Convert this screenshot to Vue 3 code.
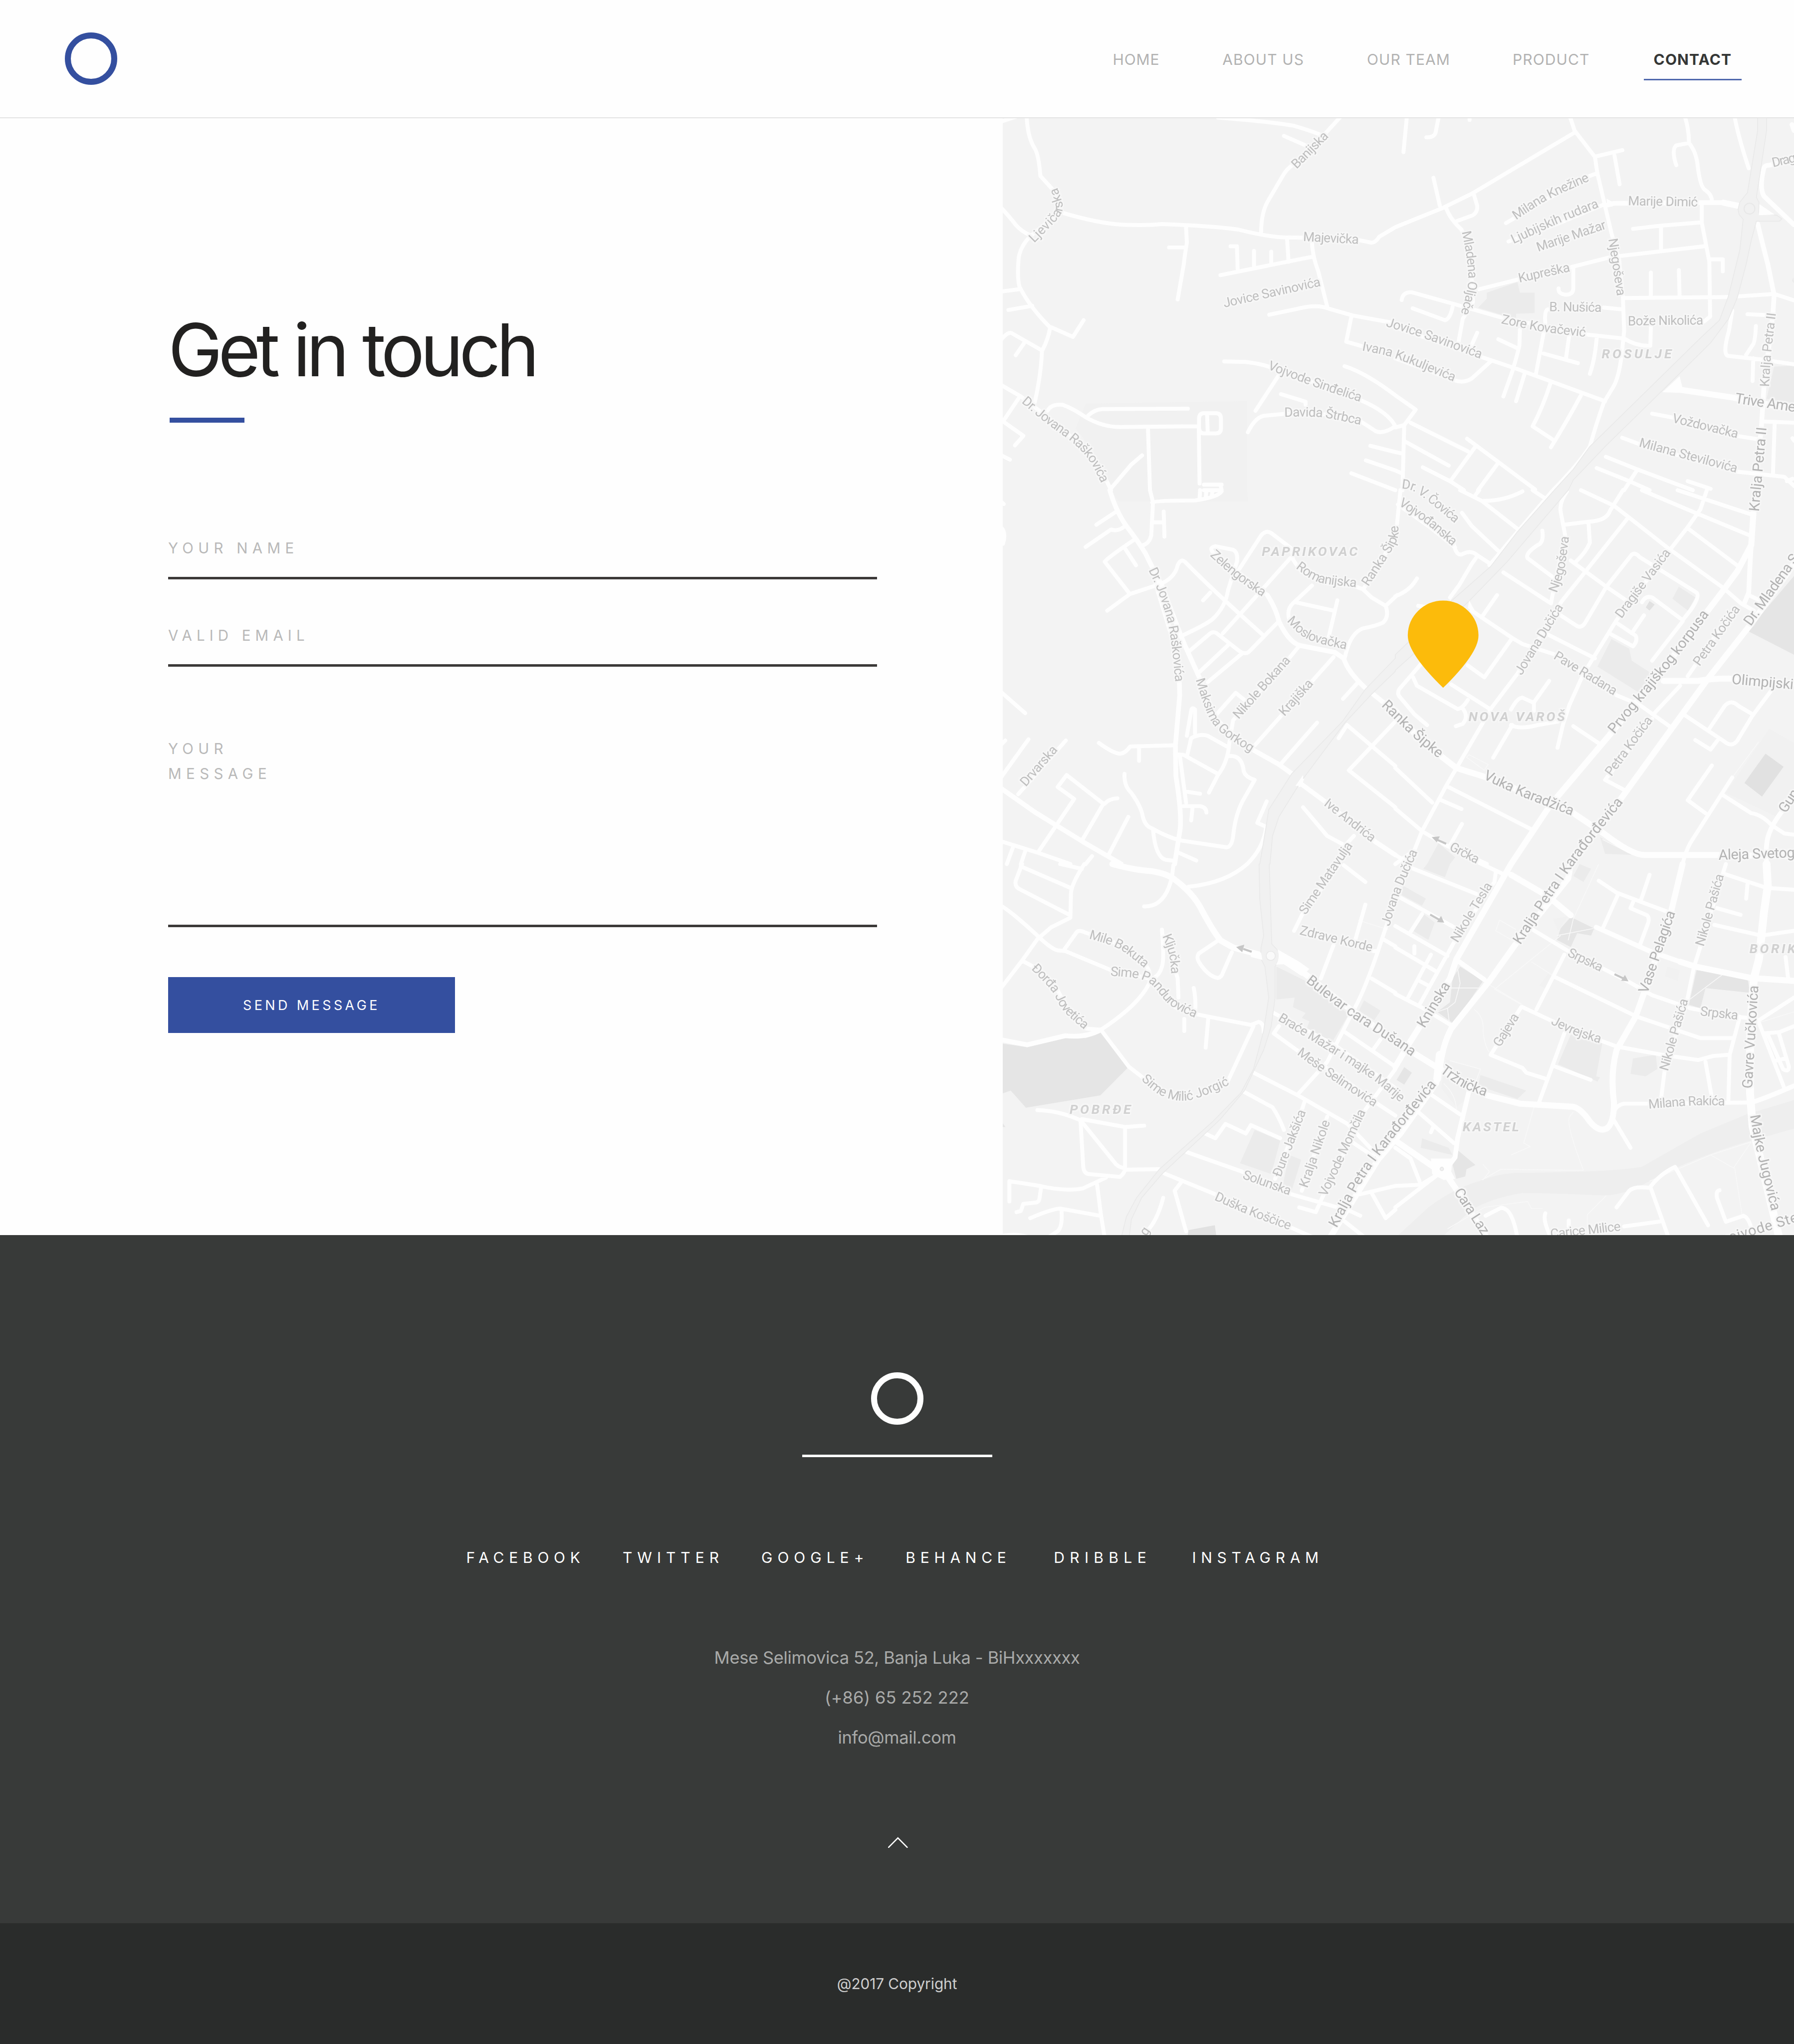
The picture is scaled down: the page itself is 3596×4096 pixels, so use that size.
<script setup>
const nav = [
  { label: 'HOME' },
  { label: 'ABOUT US' },
  { label: 'OUR TEAM' },
  { label: 'PRODUCT' },
  { label: 'CONTACT', active: true },
]

const socials = ['FACEBOOK', 'TWITTER', 'GOOGLE+', 'BEHANCE', 'DRIBBLE', 'INSTAGRAM']

/*
 * City map. The area is surveyed in six sectors (a b / c d / e f), each on its
 * own 1568-unit grid. A lowercase letter switches the sector; project() turns
 * sector coordinates into map coordinates.
 */
const sectors = {
  a: [2400, 280], b: [3360, 280],
  c: [2400, 1180], d: [3360, 1180],
  e: [2400, 2080], f: [3360, 2080],
}
const SX = 960 / 1568
const SY = 900 / 1568

function project(src) {
  let origin = sectors.a
  return src.replace(/([a-f])|(-?\d+),(-?\d+)/g, (m, sector, x, y) => {
    if (sector) {
      origin = sectors[sector]
      return ''
    }
    return (origin[0] + x * SX).toFixed(1) + ',' + (origin[1] + y * SY).toFixed(1)
  })
}

const minorRoads = [
  // north-west
  'a M118,0 Q122,90 150,135 Q165,160 172,250 L240,330 L250,400 L130,505 Q90,550 86,600 Q80,680 90,715 Q130,800 210,885 Q205,930 178,985 Q175,1080 150,1200',
  'a M10,25 L75,2', 'a M10,375 Q50,420 75,455 Q100,485 135,500',
  'a M250,402 Q400,450 500,455 Q600,458 650,452 Q850,460 950,475 Q1080,510 1150,508 L1240,510 L1420,518 L1475,530 Q1490,530 1505,505 L1568,465 b L185,385 L300,325 L705,68',
  'a M745,465 L748,530 Q740,580 736,620 L712,768', 'a M678,550 L740,550',
  'a M870,5 Q1100,25 1170,40 Q1250,65 1290,85', 'a M1350,5 L1290,75 L1170,200 Q1140,220 1125,250 L1070,350 Q1040,400 1040,490',
  'a M1130,82 L1215,122', 'a M1142,510 L1148,610', 'a M880,666 L1245,588', 'a M1240,520 Q1240,580 1265,650 L1300,798',
  'a M920,545 L945,545 L948,645', 'a M1012,565 L1012,635', 'a M1080,568 L1080,620',
  'a M1072,832 L1180,808 Q1260,785 1310,808 L1400,835 L1568,868', 'a M1395,840 L1375,945 L1440,965',
  'a M15,735 L90,725', 'a M46,812 L140,795', 'a M215,885 L300,925 L342,855', 'a M15,940 Q45,900 60,910 L175,980', 'a M112,945 L75,1002',
  'a M10,1122 L95,1175 Q250,1300 330,1380 Q400,1450 450,1568', 'a M85,1185 L28,1275', 'a M15,1272 L105,1340 L72,1380', 'a M15,1420 L52,1440',
  'a M200,1235 Q215,1205 260,1210 Q300,1225 350,1262 Q420,1305 490,1303 L790,1300', 'a M360,1255 Q385,1230 415,1228 L752,1226',
  'a M595,1305 L603,1568', 'a M795,1300 L798,1540',
  'a M815,1245 L862,1245 Q882,1245 882,1268 L882,1310 Q882,1330 860,1330 L815,1330 Q796,1330 796,1305 L796,1270 Q796,1245 815,1245Z',
  'a M828,1255 L830,1320', 'a M815,1545 L885,1545', 'a M815,1568 L885,1568 L880,1545',
  'a M450,1560 L530,1460 L572,1422', 'a M895,1028 L980,1030 Q1040,1038 1070,1050 L1230,1110 L1430,1190 Q1540,1240 1568,1300',
  'a M1108,1088 L1018,1235', 'a M1118,1165 L1215,1197 L1215,1210',
  'a M988,1325 Q1020,1255 1060,1255 L1130,1248 L1300,1250 L1430,1278 L1490,1320 Q1520,1335 1568,1300',
  'a M1368,1048 Q1450,1075 1568,1170 b L80,1230 L35,1295 L0,1305', 'a M1470,1382 L1568,1408 b L25,1414', 'a M1452,1443 L1568,1485 b L25,1497', 'a M1395,1497 L1568,1568',
  // north-east
  'b M45,5 L32,150', 'b M170,5 L158,70 Q150,90 122,88', 'b M292,5 L292,15',
  'b M688,5 L705,60 L785,170 L795,240 L830,400 L850,490 L880,600 L895,760 L900,900 L895,950 Q885,1080 860,1130 L820,1200 Q790,1290 765,1385 Q720,1460 620,1568',
  'b M150,258 L175,375', 'b M200,385 Q215,430 260,475 L295,560 L305,780 L265,850 L248,950', 'b M308,325 L322,375 Q325,400 305,415 L240,440',
  'b M790,168 L893,142', 'b M862,165 L882,285', 'b M795,238 L760,252 L600,345 L435,448', 'b M445,525 L640,450 L820,370',
  'b M1140,5 Q1155,60 1155,110', 'b M1105,205 Q1085,140 1105,122 L1155,112 Q1185,150 1190,215 Q1200,300 1220,310 Q1245,330 1245,355',
  'b M1335,5 Q1350,90 1390,218', 'b M935,472 L1050,458 L1200,445', 'b M1045,470 L1045,560', 'b M1205,375 L1205,445 L1235,610 L1238,840 L1215,860',
  'b M330,725 L480,685 L700,630 L850,590 L1215,545', 'b M1235,600 L1288,600 L1288,650', 'b M700,640 L700,720 Q700,748 670,748 Q640,745 642,722',
  'b M895,762 L1310,758', 'b M1350,755 L1490,745 L1568,772', 'b M1005,655 L1005,755', 'b M1115,645 L1118,755',
  'b M25,770 Q30,735 65,738 L240,790 L420,845 L750,915 L900,932 Q950,965 1003,962 L1005,885', 'b M68,805 L195,855 Q215,850 225,800',
  'b M820,802 L895,810', 'b M600,810 Q585,815 590,870 L553,1080', 'b M405,935 L475,970', 'b M490,895 L488,960 Q480,1000 460,1070 L425,1175',
  'b M510,1075 L475,1195', 'b M322,908 L298,965', 'b M0,885 L150,940 L340,1010 L480,1060 L825,1195', 'b M375,1028 L300,1100 Q270,1120 235,1108 L0,1015',
  'b M683,925 L672,1010', 'b M583,995 L718,1035', 'b M792,930 Q785,1020 765,1080', 'b M610,1120 Q580,1220 540,1300 L625,1360', 'b M730,1170 Q680,1270 612,1388',
  'b M1325,815 L1312,900 Q1285,1000 1310,1005 L1440,1020 L1568,1040', 'b M1385,830 L1480,835', 'b M1418,880 Q1415,950 1405,960 L1380,1000', 'b M1408,1015 L1405,1110',
  'b M1010,1247 L1100,1265 L1340,1340 L1430,1355', 'b M892,1348 L960,1375 L1340,1490 L1530,1512 L1568,1550', 'b M828,1428 L950,1480 L1170,1568',
  'b M792,1475 L920,1530 L1000,1568', 'b M950,1485 L900,1568', 'b M1150,1530 L1240,1562', 'b M1450,1280 L1568,1285', 'b M1492,1285 L1485,1505',
  'b M60,1285 L285,1405', 'b M35,1300 L28,1568', 'b M40,1365 L210,1465', 'b M282,1352 L550,1565', 'b M315,1385 L220,1525', 'b M108,1472 L215,1530 L270,1568', 'b M400,1460 L325,1568',
  'b M1562,1350 L1568,1360', 'b M1562,1520 L1540,1530',
  // west
  'c M470,90 L392,145', 'c M505,150 Q480,175 450,165 L350,238', 'c M603,0 L615,50 L608,190 Q600,225 572,232', 'c M612,52 Q620,43 780,43 Q870,30 885,5',
  'c M800,0 L798,35', 'c M825,0 L822,32', 'c M850,0 L845,28', 'c M657,90 L660,195', 'c M615,135 L655,135', 'c M545,205 Q440,280 425,300 L520,430', 'c M505,245 L548,315',
  'c M435,505 L525,435 L640,395 Q700,370 712,315 Q725,285 740,300 Q850,420 1045,605', 'c M840,430 L812,462',
  'c M730,610 Q830,560 850,540 Q900,490 910,420 L945,300 Q950,260 930,250 L860,235 Q835,240 850,260 L1065,440',
  'c M955,330 L1040,190 Q1060,165 1080,180 L1160,245 L1165,285', 'c M1155,285 L970,505 L890,600', 'c M1165,290 L1190,330 Q1250,400 1400,400 L1440,415 L1475,450 L1530,485 L1575,440',
  'c M1530,485 Q1545,530 1520,555 Q1490,570 1440,580 Q1390,600 1370,700', 'c M1240,400 L1165,475 Q1140,500 1150,540', 'c M1175,470 L1325,505', 'c M1340,462 L1305,620', 'c M1445,410 L1568,200',
  'c M1105,555 L990,680 Q975,690 955,675 L865,600 Q850,590 835,605 L752,680', 'c M910,650 L795,765', 'c M965,685 L830,805', 'c M1185,660 L1150,705 L930,965 L915,1060', 'c M1325,700 L1250,790 L1015,1070',
  'c M865,940 L940,850 L975,880', 'c M1418,810 L1362,875', 'c M1345,1040 L1378,985 L1568,1157', 'c M1568,970 L1385,1175 L1568,1330', 'c M1260,975 L1120,1145',
  'c M10,840 L112,935', 'c M10,1075 L34,1050', 'c M125,1045 L10,1215', 'c M272,1050 L85,1275', 'c M335,1470 L420,1315 L275,1195 L240,1245 L305,1295 L165,1515', 'c M475,1292 Q440,1295 425,1315',
  'c M10,1470 L160,1520 L290,1568', 'c M65,1495 L40,1568', 'c M112,1515 L95,1568', 'c M518,1370 L440,1530', 'c M375,1535 L350,1568',
  'c M402,1060 Q460,1105 485,1105 Q505,1105 525,1075 L700,1070', 'c M560,1080 L560,1135',
  'c M503,1190 Q500,1240 530,1270 Q570,1330 575,1370 Q585,1410 610,1418 Q680,1460 730,1470 L905,1498 Q925,1495 930,1450 Q940,1350 975,1290 L1015,1215 Q980,1205 972,1180 Q965,1110 915,1115',
  'c M615,1425 Q625,1540 665,1550 L700,1555', 'c M715,1520 L785,1553', 'c M748,1030 L765,925 Q768,908 780,920 L780,1020', 'c M750,1110 L765,1040 Q800,1020 830,1030 L905,1075',
  'c M915,1060 Q910,1140 870,1195 L835,1268', 'c M710,1108 L735,1110 L870,1190', 'c M720,1110 L745,1310', 'c M750,1265 L800,1273', 'c M735,1325 L800,1325 Q825,1330 825,1352', 'c M770,1335 L765,1385',
  'c M1062,1305 L1025,1395 L1060,1412 Q1050,1500 985,1568 e Q900,80 755,95', 'c M1205,1330 L1300,1450 L1370,1490 L1405,1450', 'c M10,150 Q40,170 25,225', 'c M15,45 L28,58',
  // centre and east
  'd M255,0 L340,45 L490,170', 'd M345,45 Q430,45 500,5', 'd M540,0 L590,35', 'd M330,0 L315,20', 'd M620,0 L480,175 L370,315', 'd M262,95 L300,150 L405,255',
  'd M230,225 Q240,285 270,265 Q300,250 325,275 L375,310', 'd M320,280 L300,310 L250,400 L215,450', 'd M85,370 Q60,420 0,445', 'd M10,60 L130,150 L235,240', 'd M20,0 L5,160',
  'd M675,5 Q645,50 650,90 L668,190 L620,430 L612,475', 'd M665,145 L760,132 Q830,130 845,85 L895,0', 'd M760,140 L765,220 Q750,260 710,300',
  'd M578,170 Q585,220 560,230 Q510,265 520,285 L620,365', 'd M730,0 L860,65 L1075,245 L1290,410 L1360,475 L1410,505', 'd M425,345 L605,470', 'd M690,295 L830,405 L905,460',
  'd M912,120 L745,345 L655,465 L480,770 L380,910 L200,1240 L105,1430 L75,1510 L0,1568', 'd M1130,545 L1160,505 Q1200,445 1185,430 L960,280 Q945,260 930,270 L830,405 L750,550 Q735,580 715,570 L650,525', 'd M1130,550 L1010,715',
  'd M1225,0 L1200,80 L1150,155 L1080,250 L870,545 L740,770 L685,900 L660,980 L638,1080', 'd M970,0 L1180,95 L1395,190', 'd M1110,0 L1395,100', 'd M1150,160 L1350,320',
  'd M970,470 Q985,440 1010,450 L1130,545', 'd M978,525 L930,600', 'd M875,560 L945,610 Q955,630 935,655 L850,605', 'd M590,600 L785,705', 'd M300,505 L460,620 L500,645 L630,690 L870,860 L960,900 L1085,995',
  'd M400,440 L345,525', 'd M460,620 L350,785 L285,735', 'd M90,485 L120,490', 'd M100,730 L15,835 Q5,855 20,870 L75,940 L125,985', 'd M70,785 L85,820 L245,918 Q265,915 285,880',
  'd M265,915 Q290,950 265,980 L238,990', 'd M220,815 L375,920', 'd M605,800 L545,890 L545,925', 'd M545,892 L500,870 Q480,870 455,920', 'd M460,985 L385,1122', 'd M455,985 Q490,1005 560,985 L640,970', 'd M700,990 L805,1065',
  'd M1390,440 L1430,460', 'd M1330,500 L1150,780', 'd M1120,820 L1015,940', 'd M1010,960 L825,1215 L905,1260', 'd M1475,845 L1405,945 L1345,1050 Q1325,1080 1295,1055 L1140,945', 'd M1235,1000 L1295,905 Q1320,875 1350,905 L1405,940',
  'd M1180,1048 L1240,1088 L1270,1045', 'd M1245,1155 L1150,1300 L1220,1355', 'd M1325,1205 L1160,1480 Q1140,1520 1130,1568', 'd M1290,1280 L1400,1355 Q1440,1360 1480,1405 L1530,1440 L1568,1445',
  'd M0,1165 L145,1310', 'd M0,1335 L105,1430 L200,1490 L360,1568', 'd M200,1240 L540,1425', 'd M180,1300 L260,1337', 'd M262,1400 L215,1490', 'd M0,1530 L60,1568',
  // south-west
  'e M100,0 L75,70 Q70,95 90,105 L290,215', 'e M95,10 L290,100', 'e M345,0 Q290,90 292,130 L290,225 L215,265 L160,315 L100,405 L10,530', 'e M10,170 Q60,200 170,310 Q215,355 240,362 L270,365 L450,445 L600,480 L700,600 L785,630 L1000,675 L1030,662 Q1050,665 1050,705',
  'e M250,0 L335,20', 'e M265,360 L315,285 Q325,275 350,288 L480,335 L590,430 Q610,460 600,500 Q560,590 410,695', 'e M650,275 Q660,400 650,430 Q640,470 610,480',
  'e M100,405 L160,440 L240,530 L290,630 L350,690 L410,695', 'e M410,695 L520,850 L580,900', 'e M905,920 L1010,680', 'e M695,5 L690,50 Q665,180 580,178', 'e M865,325 L795,375 Q785,390 795,410 Q830,470 870,478 Q885,475 890,455 L925,370',
  'e M655,300 L690,400 L712,480 L715,560 M738,650 L738,700', 'e M775,520 Q785,570 780,625', 'e M832,650 L822,770', 'e M1350,0 L1200,215 L1170,280', 'e M1450,170 L1410,320', 'e M1325,340 L1275,480', 'e M1365,5 L1450,75', 'e M1480,365 L1500,365',
  'e M1568,150 L1520,300 Q1450,530 1400,620 L1300,830 L1185,965', 'e M1520,315 L1568,345', 'e M1475,480 L1568,540', 'e M1370,705 L1568,850', 'e M1510,735 L1480,780', 'e M1090,625 L1330,760 L1568,940', 'e M1110,680 L1090,710 L1180,780 L1350,890 L1490,1000 L1568,1055',
  'e M1010,875 L1185,970 L1380,1090 L1500,1225', 'e M972,955 L1085,1020 Q1110,1060 1130,1115', 'e M1210,1000 L1185,1080 L1095,1320', 'e M820,1130 L860,1150 L900,1090 L980,1130 L1000,1095 L1115,1150', 'e M748,1208 L965,1290 L1160,1385 L1340,1440',
  'e M660,1298 L860,1385 L1250,1568', 'e M725,1335 L700,1370 L745,1540', 'e M655,1400 Q630,1500 590,1540', 'e M160,1032 Q250,1035 330,1075 L470,1260 Q485,1275 505,1275', 'e M335,1070 L505,1103 L580,1097',
  'e M330,1080 L340,1260 Q340,1295 360,1300 L485,1312 Q505,1295 505,1275 L505,1103', 'e M505,1282 L638,1280', 'e M50,1415 L50,1330 L170,1350 Q270,1375 340,1360 L430,1315', 'e M395,1345 L410,1470 L425,1568',
  'e M175,1355 L168,1405 Q165,1420 150,1420 L105,1425 L95,1455 L78,1460', 'e M132,1485 Q220,1445 250,1445 L405,1475', 'e M255,1455 Q260,1520 240,1540 L200,1568', 'e M10,1562 Q80,1545 130,1568', 'e M1190,1440 L1255,1460 L1280,1400 L1450,1030 L1568,860',
  'e M1350,1435 L1430,1475', 'e M1390,1160 L1480,1225', 'e M1300,1060 L1200,1370', 'e M1430,1385 L1568,1350', 'e M1475,1380 L1530,1485 L1568,1450', 'e M1370,1500 L1450,1568',
  // south-east
  'f M330,-5 L430,45', 'f M540,275 L680,365 L820,440 L920,495 L1010,550 L1160,605 L1340,640 L1420,650', 'f M800,70 L870,120 L1070,200', 'f M1000,45 L965,155', 'f M935,160 L925,185 L990,215 Q1000,225 995,245 L962,340', 'f M875,130 L818,265',
  'f M1290,40 L1460,100 L1568,108', 'f M1385,85 L1380,145', 'f M1265,185 L1358,213', 'f M1255,255 L1440,300 L1568,280', 'f M1300,0 L1190,380 L1175,430 L1150,560 L1060,860 L1045,985', 'f M1535,390 L1545,480',
  'f M60,15 L330,130', 'f M0,130 L130,205 L240,270', 'f M395,35 L390,75 L230,330 L95,590', 'f M105,210 L60,285', 'f M0,260 L205,385', 'f M0,350 L160,450', 'f M140,380 L50,560', 'f M75,345 L75,375', 'f M95,490 L130,510', 'f M0,545 L110,605 L225,680',
  'f M665,380 L555,610', 'f M500,600 L680,690 L870,765', 'f M495,600 L375,800 L500,855 L515,875 L590,900', 'f M665,710 L565,1000', 'f M630,850 L768,905', 'f M630,475 L950,640 L1200,730 L1330,730', 'f M870,765 L1050,800 L1190,822 L1250,805 L1310,800',
  'f M1355,640 L1315,800 L1310,990', 'f M1220,830 L1245,980', 'f M1400,1000 L1000,1005 L900,1005 Q870,1010 860,1040', 'f M860,1075 L925,1190', 'f M1430,655 L1568,560', 'f M1430,665 L1530,940', 'f M1450,710 L1510,705 L1568,680', 'f M1465,715 L1525,860 Q1548,875 1548,850 L1510,715',
  'f M1495,825 L1535,815', 'f M145,970 L255,1050', 'f M90,1040 L230,1170', 'f M150,1100 L140,1125', 'f M0,1190 L60,1235 L95,1330', 'f M0,1350 L100,1345 L170,1300 L0,1440',
  'f M355,1475 L415,1442 Q460,1440 480,1568', 'f M590,1465 Q580,1490 605,1550', 'f M682,1495 L682,1520', 'f M870,1440 L920,1370 Q940,1350 1000,1358 Q1040,1300 1100,1270 L1230,1515', 'f M1005,1360 L1075,1568', 'f M900,1520 L1050,1498', 'f M1275,1368 Q1260,1370 1265,1400 L1300,1500 L1370,1475 Q1400,1490 1405,1568',
]

const midRoads = [
  'c M445,0 Q470,90 510,150 Q560,220 585,265 L620,340 L650,400 Q720,600 740,650 L795,780 L860,955 L900,1000 L1010,1090 L1110,1150 L1165,1192', 'c M1190,1235 L1200,1210', 'c M1195,1230 L1290,1305 L1490,1475 L1568,1530',
  'c M1065,440 Q1100,500 1110,550 Q1150,640 1195,652 L1330,680 L1365,705 Q1380,760 1450,830', 'c M620,370 L700,650 L718,790 L720,860 L703,1070 L705,1200 Q728,1350 722,1420 L700,1568', 'c M10,1245 L150,1350 L340,1475 L490,1568',
  'c M1480,855 L1568,930', 'b M1425,450 Q1450,560 1465,620 L1490,750 L1485,830 L1450,1130 L1440,1300 L1415,1568', 'b M1560,35 L1568,60', 'b M1568,180 L1470,205 Q1455,205 1450,215 Q1430,300 1450,335 L1568,455', 'b M835,372 L860,365 L1180,362 L1290,362',
  'd M1400,230 Q1395,300 1390,430 L1370,480', 'd M1568,1285 Q1490,1380 1470,1440 Q1455,1480 1460,1568', 'e M10,735 L120,758 L270,720 Q350,730 410,695', 'f M290,950 L245,1150 L235,1230 L200,1280', 'f M245,405 L350,485', 'f M1400,1000 Q1450,985 1568,930', 'f M790,265 L1000,365 L1120,410',
]

const mainRoads = [
  'b M1110,1145 L1330,1180 L1568,1230', 'b M1290,362 L1360,378', 'c M1550,910 L1568,925 d L100,1050 L240,1165 L360,1205 L680,1340 L820,1440 Q930,1530 980,1530 L1260,1530 L1568,1535',
  'd M1410,70 L1400,230 L1345,340 L1290,420 L1040,770 L840,1030 L610,1320 L455,1568 f L240,400 L215,480 L50,760 L0,850', 'd M1568,310 L1400,560 L1230,790 L1080,1010 L890,1290 L690,1568 f L680,60 L470,340 L370,490 L220,690 Q185,760 175,860 L160,920 L20,1130 e L1500,1240 L1310,1568',
  'd M1055,800 L1190,800 Q1240,790 1310,790 L1568,810', 'e M455,0 Q540,25 610,30 Q670,40 700,65 Q770,120 800,180 Q850,280 880,320 L930,350 L1050,385', 'e M1100,380 L1200,450 L1380,600 L1568,745 f L160,850 L360,970 L490,1005 L700,1018 Q730,1025 765,1080 Q800,1125 830,1110 Q860,1090 860,1000 Q845,880 870,780 L945,640 L985,520 L1080,220 L1130,0',
  'f M455,45 L600,135 L690,215', 'f M1120,410 L1180,430 L1400,478 L1568,490', 'f M0,1160 L150,1270 L185,1280 L250,1380 L360,1568',
]

const arterialRoads = ['f M1460,0 L1465,90 L1450,200 L1430,400 L1410,480 L1395,700 L1395,960 L1405,1100 L1510,1568', 'e M1115,390 L1200,450', 'f M175,800 L165,900']

const blocks = [
  { d: 'a M350,1205 L985,1195 L985,1568 c L990,48 L480,48 a L450,1568 Q400,1420 310,1310Z', tone: 'faint' },
  { d: 'b M325,803 L360,765 L360,740 L480,695 L490,740 L548,740 L548,825 L475,828 L475,850Z', tone: 'soft' },
  { d: 'b M1490,1050 L1568,1045 L1568,1205 L1460,1185Z b M1565,675 L1568,700 L1560,690Z', tone: 'soft' },
  { d: 'd M850,625 L920,665 L930,715 L1010,770 L960,850 L795,740Z', tone: 'soft' },
  { d: 'd M1115,405 L1180,450 L1150,505 L1090,455Z', tone: 'soft' },
  { d: 'd M1470,1000 L1568,1060 L1568,1290 L1500,1370 L1300,1270Z', tone: 'faint' },
  { d: 'd M1000,465 L1020,480 L1000,505 L985,492Z M1456,1105 L1527,1160 L1442,1285 L1373,1228Z', tone: 'dark' },
  { d: 'd M1568,360 L1385,590 L1568,690Z', tone: 'mid' },
  { d: 'd M170,1480 L235,1540 L215,1568 f L195,55 L110,20 d L125,1568Z', tone: 'soft' },
  { d: 'd M805,1455 L935,1530 L825,1525Z', tone: 'soft' },
  { d: 'e M15,752 L120,768 L270,730 L350,730 L415,705 L520,850 L408,970 L115,1022 L55,950 L15,965Z', tone: 'mid' },
  { d: 'e M1100,430 L1215,490 L1385,630 L1320,745 L1220,690 L1230,660 L1200,645 L1215,625 L1165,600 L1172,560 L1100,568Z', tone: 'soft' },
  { d: 'e M1445,572 L1510,615 L1485,655 L1425,615Z', tone: 'soft' },
  { d: 'e M1015,1115 L1115,1160 L1080,1300 L957,1255Z M1150,1220 L1198,1240 L1160,1370 L1125,1350Z', tone: 'soft' },
  { d: 'e M755,1535 L858,1515 L865,1568 L750,1568Z', tone: 'dark' },
  { d: 'e M15,1075 L35,1103 L15,1103Z', tone: 'mid' },
  { d: 'f M690,222 L782,270 L770,300 L715,290 L690,348 L635,318 L650,270Z', tone: 'mid' },
  { d: 'f M255,430 L345,490 L230,670 L165,620 L215,580 L225,480Z', tone: 'mid' },
  { d: 'f M1185,445 L1385,480 L1395,540 L1220,520 L1200,605 L1155,590Z', tone: 'mid' },
  { d: 'f M245,1200 L315,1262 L280,1280 L275,1310 L240,1320 L225,1260Z', tone: 'mid' },
  { d: 'f M35,852 L65,875 L35,925 L5,905Z', tone: 'mid' },
  { d: 'f M30,90 L120,145 L105,175 L25,130Z M105,205 L155,245 L130,318 L70,280Z M725,0 L770,20 L740,75 L700,50Z', tone: 'soft' },
  { d: 'f M690,715 L815,745 L790,890 L805,895 L795,912 L640,840Z M935,815 L1025,800 L1030,860 L985,890 L925,880Z', tone: 'soft' },
  { d: 'f M335,885 L515,950 L480,985 L325,930Z M105,1150 L210,1190 L225,1220 L100,1190Z', tone: 'soft' },
  { d: 'f M200,820 L335,860 L320,950 L240,1020 L180,940Z M1070,430 L1118,445 L1110,490 L1060,470Z M600,460 L630,480 L600,525 L565,510Z M620,230 L680,220 L640,280Z', tone: 'faint' },
]

const river = 'f M0,1568 L130,1440 Q230,1360 330,1330 Q420,1290 520,1295 L740,1290 Q880,1285 970,1270 Q1100,1190 1200,1130 L1380,1050 L1568,990 L1568,1110 L1450,1145 Q1250,1200 1050,1300 L1000,1330 Q900,1390 820,1390 Q600,1380 500,1380 Q380,1400 300,1450 L180,1568Z'

const paths = [
  'f M800,0 L700,230 L680,320', 'f M245,440 L255,500 Q240,560 235,580 L205,605 L212,660 M165,620 L205,605', 'f M215,520 L345,520', 'f M740,1285 Q670,1090 685,1060 L700,1040', 'f M545,1020 L505,1170 L530,1185 L455,1220',
  'f M650,300 L390,525 L495,590 M360,500 L500,590', 'f M535,410 L630,475', 'f M635,300 L780,270', 'f M215,825 L335,860 L300,960', 'f M310,610 Q350,640 345,700 Q350,760 370,790', 'f M1285,465 L1155,570', 'f M340,1325 L415,1280 L740,1285', 'f M1000,1330 L1240,1220 L1400,1165', 'f M1240,1220 L1330,1275 L1400,1165 M1335,1275 L1365,1480',
  'f M345,1260 L370,1290 L345,1325', 'f M205,1530 L350,1440 L520,1415 L535,1445 L580,1445 M755,1568 L755,1470 L830,1390', 'f M410,235 L475,275 M410,235 L395,280 L460,320', 'd M280,1120 L290,1110 L365,1150 L350,1175 Z', 'd M1430,1055 L1325,1205', 'd M815,1465 L935,1530', 'e M1420,235 L1540,275', 'f M190,920 Q240,970 240,1030', 'f M1430,665 L1568,620',
]

const railway = 'b M1425,-20 L1425,60 L1405,190 L1385,320 L1355,360 L1348,390 L1352,412 L1368,432 L1355,560 L1310,755 L1275,855 L1200,930 L765,1385 L700,1480 d L625,0 L480,175 L375,320 L220,465 L0,690 c L1568,705 L1450,835 L1360,970 L1160,1190 L1070,1340 L1060,1410 L1035,1568 e L1032,0 L1035,150 L1050,300 L1040,350 L1038,395 L1055,430 L1070,560 L1050,700 L1010,860 L960,960 L850,1080 L640,1280 L550,1400 L510,1480 L485,1590 L518,1590 L530,1490 L570,1400 L650,1300 L880,1070 L975,950 L1050,780 L1080,680 L1095,560 L1095,430 L1110,400 L1108,365 L1082,335 L1072,0 c L1075,1568 L1085,1450 L1110,1370 L1195,1225 L1370,975 L1475,855 L1568,760 d L0,755 L100,660 L290,465 L440,300 L680,0 b L700,1525 L830,1380 L1060,1140 L1240,950 L1310,850 L1345,760 L1380,620 L1400,520 L1420,440 L1510,440 L1520,430 L1500,415 L1430,405 L1430,360 L1420,340 L1440,200 L1460,60 L1460,-20Z'

const junctions = ['b M1050,1157 L1118,1090 L1130,1140 L1125,1160Z', 'b M1432,368 L1492,412 L1430,415Z', 'e M1105,358 L1190,410 L1230,440 L1200,470 L1130,420 L1098,422 Q1115,400 1105,358Z', 'e M1040,372 L1000,365 L1000,390 L1045,402Z', 'b M830,345 L860,362 L855,378 L835,380Z', 'c M1175,1240 L1205,1195 L1205,1240Z', 'd M290,462 L310,500 L320,520 L285,495Z', 'd M215,435 L235,430 L215,465Z', 'f M140,1235 L225,1235 L220,1290 L235,1320 L190,1325 L145,1300Z']

const arrows = [
  { line: 'd M200,1483 L165,1466', head: 'd M143,1455 L175,1452 L163,1477Z' },
  { line: 'e M1003,368 L970,356', head: 'e M942,348 L974,338 L966,370Z' },
  { line: 'f M137,212 L175,235', head: 'f M192,246 L180,218 L164,243Z' },
  { line: 'f M862,462 L898,480', head: 'f M917,492 L903,465 L888,489Z' },
]

const labels = [
  ['Ljevičarska', 'a 148,532 205,470 247,420 260,375 238,297'],
  ['Banijska', 'a 1180,222 1308,85'],
  ['Majevička', 'a 1205,523 1424,535'],
  ['Jovice Savinovića', 'a 895,802 1277,711'],
  ['Vojvode Sinđelića', 'a 1065,1060 1240,1130 1430,1198'],
  ['Davida Štrbca', 'a 1132,1260 1275,1262 1432,1294'],
  ['Dr. Jovana Raškovića', 'a 97,1200 190,1283 300,1370 365,1445 412,1540'],
  ['Jovice Savinovića', 'b -38,880 110,930 335,1017'],
  ['Ivana Kukuljevića', 'b -132,982 0,1015 230,1113'],
  ['Milana Knežine', 'b 475,435 600,350 765,270'],
  ['Ljubijskih rudara', 'b 465,535 640,450 803,380'],
  ['Marije Mažar', 'b 562,568 832,470'],
  ['Marije Dimić', 'b 915,373 1190,378'],
  ['Kupreška', 'b 488,697 690,650'],
  ['B. Nušića', 'b 605,817 812,820'],
  ['Zore Kovačević', 'b 415,868 580,903 748,925'],
  ['Bože Nikolića', 'b 915,877 1212,873'],
  ['ROSULJE', 'b 812,1015 1087,1015', 'district'],
  ['Njegoševa', 'b 838,515 856,640 872,755'],
  ['Mladena Oljače', 'b 262,485 280,590 286,700 258,828'],
  ['Drag', 'b 1486,213 1578,190'],
  ['Kralja Petra II', 'b 1470,1135 1478,1000 1497,825'],
  ['Kralja Petra II', 'd 1430,90 b 1460,1305', 'main'],
  ['Trive Ame', 'b 1335,1202 1572,1240', 'main'],
  ['Voždovačka', 'b 1087,1283 1345,1350'],
  ['Milana Stevilovića', 'b 957,1385 1342,1495'],
  ['Dr. V. Čovića', 'b 25,1560 d 90,15 235,140'],
  ['Vojvođanska', 'd 12,62 120,140 225,235'],
  ['Zelengorska', 'c 838,275 935,365 1045,448'],
  ['PAPRIKOVAC', 'c 1043,275 1420,275', 'district'],
  ['Romanijska', 'c 1175,327 1265,385 1415,407'],
  ['Ranka Šipke', 'c 1462,405 1568,225 d 12,148'],
  ['Moslovačka', 'c 1140,550 1225,626 1375,668'],
  ['Dr. Jovana Raškovića', 'c 597,335 640,440 680,590 703,805'],
  ['Maksima Gorkog', 'c 783,795 815,900 850,978 905,1035 1000,1100'],
  ['Nikole Bokana', 'c 952,962 1158,715'],
  ['Krajiška', 'c 1132,950 1248,812'],
  ['Drvarska', 'c 115,1245 242,1090'],
  ['Ive Andrića', 'c 1285,1320 1475,1478'],
  ['Sime Matavulja', 'e 1215,215 c 1402,1490'],
  ['Ranka Šipke', 'c 1512,905 d 70,1035 170,1125', 'main'],
  ['Njegoševa', 'd 635,432 665,330 683,195'],
  ['Jovana Dučića', 'd 497,778 662,490'],
  ['Dragiše Vasića', 'd 890,540 1085,262'],
  ['Pave Radana', 'd 620,705 860,862'],
  ['NOVA VAROŠ', 'd 288,968 668,968', 'district'],
  ['Prvog krajiškog korpusa', 'd 862,1024 1080,740 1235,520', 'main'],
  ['Petra Kočića', 'd 1197,740 1358,498'],
  ['Dr. Mladena S', 'd 1398,572 1590,285', 'main'],
  ['Petra Kočića', 'd 850,1202 1014,965'],
  ['Vuka Karadžića', 'd 345,1210 500,1286 695,1365', 'main'],
  ['Olimpijski', 'd 1322,812 1565,835', 'main'],
  ['Gun', 'd 1535,1357 1590,1270', 'main'],
  ['Aleja Svetog', 'd 1272,1550 1572,1540', 'main'],
  ['Grčka', 'd 210,1508 320,1568'],
  ['Kralja Petra I Karađorđevića', 'f 492,340 d 690,1590 897,1308', 'main'],
  ['Jovana Dučića', 'e 1545,262 d 15,1700 88,1515'],
  ['Zdrave Korde', 'e 1190,295 1475,368'],
  ['Mile Bekuta', 'e 362,312 480,355 582,437'],
  ['Ključka', 'e 652,302 678,380 687,462'],
  ['Sime Pandurovića', 'e 447,468 590,492 680,590 780,645'],
  ['Đorđa Jovetića', 'e 135,440 215,530 262,615 345,695'],
  ['Sime Milić Jorgić', 'e 568,905 650,972 760,990 917,925'],
  ['POBRĐE', 'e 287,1047 528,1047', 'district'],
  ['Bulevar cara Dušana', 'e 1215,495 1380,630 1568,760 f 65,808', 'main'],
  ['Braće Mažar i majke Marije', 'e 1105,655 1330,800 1480,905 f 20,1000'],
  ['Meše Selimovića', 'e 1180,798 1320,905 1485,1020'],
  ['Đure Jakšića', 'e 1117,1315 1217,1038'],
  ['Kralja Nikole', 'e 1222,1360 1312,1080'],
  ['Vojvode Momčila', 'e 1297,1397 1452,1038'],
  ['Solunska', 'e 965,1318 1152,1390'],
  ['Duška Koščice', 'e 855,1408 1000,1475 1152,1535'],
  ['g', 'e 588,1562 608,1530'],
  ['Kralja Petra I Karađorđevića', 'e 1337,1527 f -90,1265 163,925', 'main'],
  ['Nikole Tesla', 'f 245,332 383,90'],
  ['Kninska', 'f 115,690 218,508', 'main'],
  ['Srpska', 'f 675,385 807,452'],
  ['Vase Pelagića', 'f 992,545 1102,203', 'main'],
  ['Nikole Pašića', 'f 1213,347 1293,47'],
  ['Nikole Pašića', 'f 1072,870 1152,570'],
  ['BORIK', 'f 1393,373 1575,373', 'district'],
  ['Srpska', 'f 1198,635 1347,653'],
  ['Gavre Vučkovića', 'f 1403,942 1428,510', 'main'],
  ['Gajeva', 'f 412,770 488,640'],
  ['Jevrejska', 'f 610,670 700,715 805,752'],
  ['Tržnička', 'f 174,872 260,934 355,975', 'main'],
  ['Milana Rakića', 'f 997,1026 1180,1012 1297,1013'],
  ['KASTEL', 'f 265,1120 487,1120', 'district'],
  ['Majke Jugovića', 'f 1395,1055 1425,1220 1480,1457', 'main'],
  ['Cara Laz', 'f 230,1375 342,1560', 'main'],
  ['Carice Milice', 'f 612,1570 888,1537'],
  ['vojvode Stepe', 'f 1290,1595 1650,1478', 'main'],
].map(([text, anchor, kind = 'street'], i) => {
  const pts = [...project(anchor).matchAll(/(-?[\d.]+),(-?[\d.]+)/g)].map((m) => [+m[1], +m[2]])
  return { id: 'label-' + i, text, kind, ...spline(pts) }
})

/* Smooth baseline through the given points, with its approximate length. */
function spline(p) {
  const at = (i) => p[Math.max(0, Math.min(p.length - 1, i))]
  let d = `M${p[0]}`
  let length = 0
  let prev = p[0]
  for (let i = 0; i < p.length - 1; i++) {
    const [a, b, c, e] = [at(i - 1), at(i), at(i + 1), at(i + 2)]
    const c1 = [b[0] + (c[0] - a[0]) / 6, b[1] + (c[1] - a[1]) / 6]
    const c2 = [c[0] - (e[0] - b[0]) / 6, c[1] - (e[1] - b[1]) / 6]
    d += `C${c1} ${c2} ${c}`
    for (let s = 1; s <= 12; s++) {
      const t = s / 12
      const u = 1 - t
      const q = [0, 1].map((k) => u * u * u * b[k] + 3 * u * u * t * c1[k] + 3 * u * t * t * c2[k] + t * t * t * c[k])
      length += Math.hypot(q[0] - prev[0], q[1] - prev[1])
      prev = q
    }
  }
  return { d, length: (length - 0.5).toFixed(1) }
}

const join = (roads) => roads.map(project).join(' ')
const minor = join(minorRoads)
const mid = join(midRoads)
const main = join(mainRoads)
const arterial = join(arterialRoads)
const pin = project('d M188,463 Q245,463 286,506 Q327,549 327,610 Q327,684 188,829 Q49,684 49,610 Q49,549 90,506 Q131,463 188,463Z')
</script>

<template>
  <div class="page">
    <header class="header">
      <a class="logo" aria-label="Home"></a>
      <nav class="nav">
        <a v-for="item in nav" :key="item.label" :class="['nav-item', { active: item.active }]">{{ item.label }}</a>
      </nav>
    </header>

    <main class="main">
      <section class="contact">
        <h1 class="title">Get in touch</h1>
        <div class="title-bar"></div>
        <form class="form" @submit.prevent>
          <label class="field">YOUR NAME</label>
          <label class="field email">VALID EMAIL</label>
          <label class="field message">YOUR<br /><span>MESSAGE</span></label>
          <button class="send" type="submit">SEND MESSAGE</button>
        </form>
      </section>

      <section class="map">
        <svg class="map-canvas" viewBox="2414.7 284.7 1905.3 2688.5" preserveAspectRatio="none">
          <defs>
            <filter id="halo" filterUnits="userSpaceOnUse" x="2400" y="270" width="1940" height="2720" color-interpolation-filters="sRGB">
              <feMorphology in="SourceAlpha" operator="dilate" radius="3" result="spread" />
              <feGaussianBlur in="spread" stdDeviation="1.2" result="soft" />
              <feFlood flood-color="#f7f7f7" />
              <feComposite in2="soft" operator="in" result="glow" />
              <feMerge>
                <feMergeNode in="glow" />
                <feMergeNode in="glow" />
                <feMergeNode in="SourceGraphic" />
              </feMerge>
            </filter>
            <path v-for="l in labels" :id="l.id" :key="l.id" :d="l.d" />
          </defs>
          <path v-for="(b, i) in blocks" :key="i" :d="project(b.d)" :class="'block-' + b.tone" />
          <path class="river" :d="project(river)" />
          <path class="trail" :d="join(paths)" />
          <g class="roads">
            <path :d="minor" class="minor" />
            <path :d="mid" class="mid" />
            <path :d="main" class="main-road" />
            <path :d="arterial" class="arterial" />
          </g>
          <path class="railway" :d="project(railway)" />
          <path v-for="(j, i) in junctions" :key="i" class="junction" :d="project(j)" />
          <circle class="roundabout" cx="4212.8" cy="502.2" r="13" />
          <circle class="roundabout-hole" cx="3060" cy="2301" r="11" />
          <circle class="roundabout" cx="3472" cy="2814" r="4" />
          <g v-for="(a, i) in arrows" :key="i" class="arrow">
            <path :d="project(a.line)" />
            <path class="head" :d="project(a.head)" />
          </g>
          <g filter="url(#halo)">
            <text v-for="l in labels" :key="l.id" :class="l.kind" :textLength="l.length">
              <textPath :href="'#' + l.id" :textLength="l.length">{{ l.text }}</textPath>
            </text>
          </g>
          <path class="pin" :d="pin" />
        </svg>
      </section>
    </main>

    <footer class="footer">
      <div class="footer-logo"></div>
      <div class="footer-line"></div>
      <div class="socials">
        <a v-for="s in socials" :key="s">{{ s }}</a>
      </div>
      <address class="address">
        <p class="street-line">Mese Selimovica 52, Banja Luka - BiHxxxxxxx</p>
        <p class="phone">(+86) 65 252 222</p>
        <p class="mail">info@mail.com</p>
      </address>
      <svg class="to-top" viewBox="0 0 40 22">
        <path d="M1.2 20.8 L19.8 2.2 L38.4 20.8" />
      </svg>
    </footer>
    <div class="copyright">@2017 Copyright</div>
  </div>
</template>

<style>
body {
  margin: 0;
}
</style>

<style scoped>
.page {
  width: 3596px;
  height: 4096px;
  overflow: hidden;
  display: flex;
  flex-direction: column;
  background: #fefefe;
  font-family: Inter, "Noto Sans", sans-serif;
}

.header {
  box-sizing: border-box;
  height: 237px;
  flex: none;
  display: flex;
  justify-content: space-between;
  padding: 65px 0 0 130px;
  border-bottom: 2px solid #e4e4e4;
}

.logo,
.footer-logo {
  box-sizing: border-box;
  width: 105px;
  height: 105px;
  border: 12.5px solid #344f9f;
  border-radius: 50%;
}

.nav {
  display: grid;
  grid-template-columns: 218.7px 289.8px 292px 262.6px 196.4px;
  margin: 24.4px 105px 0 0;
}

.nav-item {
  height: 72px;
  color: #b2b2b2;
  font-size: 30px;
  line-height: 60px;
  letter-spacing: 1.1px;
  white-space: nowrap;
}

.nav-item:first-child {
  margin-left: -1px;
  letter-spacing: 0.9px;
}

.nav-item.active {
  box-sizing: border-box;
  padding-left: 20px;
  border-bottom: 3px solid #5068ad;
  color: #353736;
  font-weight: 700;
}

.main {
  display: flex;
  flex: none;
  height: 2238px;
}

.contact {
  box-sizing: border-box;
  width: 2010px;
  padding: 384px 252px 0 337px;
}

.title {
  margin: 0 0 55.5px;
  color: #222120;
  font-size: 146px;
  font-weight: 400;
  line-height: 160px;
  letter-spacing: -8.65px;
  word-spacing: 2px;
  white-space: nowrap;
}

.title-bar {
  width: 150px;
  height: 10px;
  margin-left: 2.5px;
  background: #344f9f;
}

.form {
  display: flex;
  flex-direction: column;
  margin-top: 226.5px;
}

.field {
  box-sizing: border-box;
  height: 88px;
  padding: 1px 0 0;
  border-bottom: 5px solid #3b3938;
  color: #b9b9b9;
  font-size: 29.5px;
  line-height: 49.7px;
  letter-spacing: 9.3px;
}

.field.email {
  margin-top: 86.7px;
  letter-spacing: 9.14px;
}

.field.message {
  height: 383px;
  margin-top: 139.5px;
}

.field.message span {
  letter-spacing: 9.4px;
}

.send {
  width: 574.5px;
  height: 112.5px;
  margin-top: 99.4px;
  padding: 3px 0 0 150px;
  border: 0;
  background: #344f9f;
  color: #fff;
  font: 400 27px/40px Inter, "Noto Sans", sans-serif;
  letter-spacing: 5.37px;
  text-align: left;
}

.map {
  width: 1586px;
  height: 2238px;
  background: #f3f3f3;
}

.map-canvas {
  display: block;
  width: 1586px;
  height: 2238px;
  overflow: hidden;
  font-family: Roboto, "Noto Sans", sans-serif;
}

.block-faint {
  fill: #f1f1f1;
}

.block-soft {
  fill: #ebebeb;
}

.block-mid {
  fill: #e5e5e5;
}

.block-dark {
  fill: #e1e1e1;
}

.river {
  fill: #eeeeee;
}

.trail {
  fill: none;
  stroke: #f8f8f8;
  stroke-width: 2;
}

.roads path {
  fill: none;
  stroke: #fefefe;
  stroke-linecap: round;
  stroke-linejoin: round;
}

.roads .minor {
  stroke-width: 9.5;
}

.roads .mid {
  stroke-width: 11.5;
}

.roads .main-road {
  stroke-width: 14.5;
}

.roads .arterial {
  stroke-width: 19;
}

.railway {
  fill: #f1f1f1;
  stroke: #e9e9e9;
  stroke-width: 2;
}

.junction {
  fill: #fefefe;
}

.roundabout {
  fill: #f1f1f1;
  stroke: #e8e8e8;
  stroke-width: 2.5;
}

.roundabout-hole {
  fill: #fafafa;
  stroke: #e8e8e8;
  stroke-width: 2;
}

.arrow path {
  fill: none;
  stroke: #c6c6c6;
  stroke-width: 5;
}

.arrow .head {
  fill: #c6c6c6;
  stroke: none;
}

.street {
  fill: #bebebe;
  font-size: 31.5px;
}

text.main {
  fill: #b2b2b2;
  font-size: 34.5px;
}

.district {
  fill: #d0d0d0;
  font-size: 32px;
  font-style: italic;
  font-weight: 700;
}

.pin {
  fill: #fcbb0b;
}

.footer {
  display: flex;
  flex: none;
  flex-direction: column;
  align-items: center;
  box-sizing: border-box;
  height: 1379px;
  padding-top: 274.7px;
  background: #383a39;
}

.footer-logo {
  border-color: #fefefe;
}

.footer-line {
  width: 381px;
  height: 5px;
  margin-top: 60.3px;
  background: #fefefe;
}

.socials {
  display: grid;
  grid-template-columns: 313.5px 278px 289.3px 297px 277.2px 274px;
  align-self: flex-start;
  margin: 171px 0 0 934.5px;
  color: #fff;
  font-size: 30px;
  line-height: 60px;
  letter-spacing: 9.73px;
  white-space: nowrap;
}

.socials a:nth-child(2),
.socials a:nth-child(3) {
  letter-spacing: 10px;
}

.socials a:nth-child(5) {
  letter-spacing: 10.35px;
}

.address {
  margin-top: 130.8px;
  color: #a9aaa9;
  font-size: 34.5px;
  font-style: normal;
  line-height: 80.15px;
  text-align: center;
}

.address p {
  margin: 0;
}

.street-line {
  letter-spacing: -0.37px;
}

.phone {
  letter-spacing: 0.1px;
}

.mail {
  letter-spacing: -0.32px;
}

.to-top {
  width: 40px;
  height: 22px;
  margin: 159px 0 0 3px;
}

.to-top path {
  fill: none;
  stroke: #fff;
  stroke-width: 2.6;
  stroke-linecap: round;
}

.copyright {
  box-sizing: border-box;
  height: 242px;
  flex: none;
  padding-top: 91.3px;
  background: #2a2c2b;
  color: #cfcfcf;
  font-size: 29.8px;
  line-height: 60px;
  letter-spacing: -0.07px;
  text-align: center;
}
</style>
